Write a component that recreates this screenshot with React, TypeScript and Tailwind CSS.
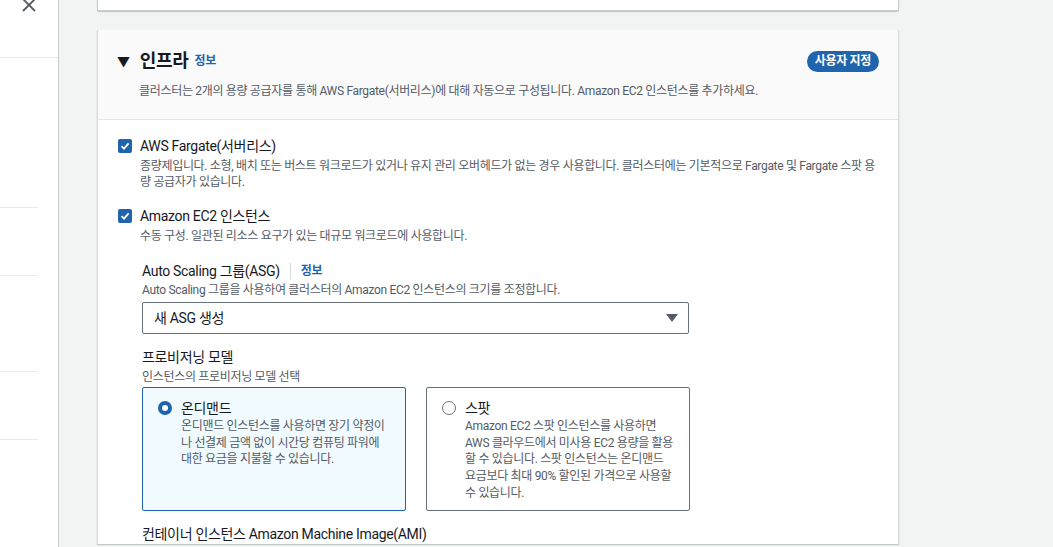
import * as React from 'react';

const font = { fontFamily: 'Roboto, "Noto Sans CJK KR", sans-serif' };

function CheckBox() {
	return (
		<span className="flex h-[14px] w-[14px] shrink-0 items-center justify-center rounded-[2px] bg-[#1f64ad]">
			<svg width="10" height="10" viewBox="0 0 10 10">
				<path d="M1.5 5.2 L4 7.6 L8.6 2.4" fill="none" stroke="#fff" strokeWidth="1.8" />
			</svg>
		</span>
	);
}

function Radio({ checked }: { checked: boolean }) {
	return checked ? (
		<span className="mt-[3px] h-[14px] w-[14px] shrink-0 rounded-full border-[4px] border-[#1f64ad] bg-white" />
	) : (
		<span className="mt-[3px] h-[14px] w-[14px] shrink-0 rounded-full border border-[#687078] bg-white" />
	);
}

function Tile({ checked, title, children }: { checked: boolean; title: string; children: React.ReactNode }) {
	return (
		<div
			className={`flex h-[124px] w-[264px] gap-[9px] rounded-[2px] border px-[15px] py-[10px] ${
				checked ? 'border-[#1f64ad] bg-[#f1faff]' : 'border-[#687078] bg-white'
			}`}
		>
			<Radio checked={checked} />
			<div className="flex flex-col">
				<span className="text-[14px] leading-[20px] text-[#16191f]">{title}</span>
				<span className="text-[12px] leading-[16.7px] text-[#545b64]">{children}</span>
			</div>
		</div>
	);
}

export default function App() {
	return (
		<div className="flex h-[547px] w-[1053px] overflow-hidden bg-[#f2f3f3] tracking-[-0.02em]" style={font}>
			<div className="relative flex w-[59px] shrink-0 flex-col border-r border-[#c6cacc] bg-white">
				<svg className="absolute left-[22px] top-[-2px]" width="14" height="14" viewBox="0 0 14 14">
					<path d="M1 1 L13 13 M13 1 L1 13" stroke="#545b64" strokeWidth="1.8" />
				</svg>
				<div className="mt-[57px] border-t border-[#e9ebed]" />
				<div className="mt-[149px] w-[38px] border-t border-[#e9ebed]" />
				<div className="mt-[67px] w-[38px] border-t border-[#e9ebed]" />
				<div className="mt-[95px] w-[38px] border-t border-[#e9ebed]" />
				<div className="mt-[67px] w-[38px] border-t border-[#e9ebed]" />
			</div>
			<div className="flex w-[802px] flex-col pl-[38px]">
				<div className="h-[11px] w-[802px] rounded-b-[2px] border-x border-b border-[#c6cacc] bg-white shadow-[0_1px_1px_rgba(0,28,36,0.2)]" />
				<div className="mt-[19px] w-[802px] border-x border-[#d5dbdb] bg-white shadow-[0_1px_1px_rgba(0,28,36,0.2)]">
					<div className="flex flex-col gap-[11px] border-b border-[#e4e6e8] bg-[#fafafa] px-[19px] pb-[20px] pt-[20px]">
						<div className="flex h-[22px] items-center">
							<span className="mr-[10px] text-[13px] leading-none text-[#16191f]">▼</span>
							<span className="text-[18px] font-bold leading-[22px] text-[#16191f]">인프라</span>
							<span className="ml-[6px] text-[12px] font-bold text-[#1f64ad]">정보</span>
							<span className="ml-auto rounded-full bg-[#1f64ad] px-[8px] py-[2px] text-[12px] font-bold leading-[17px] text-white">
								사용자 지정
							</span>
						</div>
						<p className="pl-[22px] text-[12px] leading-[16px] text-[#545b64]">
							클러스터는 2개의 용량 공급자를 통해 AWS Fargate(서버리스)에 대해 자동으로 구성됩니다. Amazon EC2 인스턴스를 추가하세요.
						</p>
					</div>
					<div className="flex flex-col px-[20px] pt-[16px]">
						<div className="flex items-center gap-[8px]">
							<CheckBox />
							<span className="text-[14px] leading-[20px] text-[#16191f]">AWS Fargate(서버리스)</span>
						</div>
						<p className="mt-[2px] pl-[22px] text-[12px] leading-[16px] text-[#545b64]">
							종량제입니다. 소형, 배치 또는 버스트 워크로드가 있거나 유지 관리 오버헤드가 없는 경우 사용합니다. 클러스터에는 기본적으로 Fargate 및 Fargate 스팟 용량 공급자가 있습니다.
						</p>
						<div className="mt-[16px] flex items-center gap-[8px]">
							<CheckBox />
							<span className="text-[14px] leading-[20px] text-[#16191f]">Amazon EC2 인스턴스</span>
						</div>
						<p className="mt-[2px] pl-[22px] text-[12px] leading-[16px] text-[#545b64]">
							수동 구성. 일관된 리소스 요구가 있는 대규모 워크로드에 사용합니다.
						</p>
						<div className="flex flex-col pl-[24px]">
							<div className="mt-[17px] flex items-center">
								<span className="text-[14px] leading-[20px] text-[#16191f]">Auto Scaling 그룹(ASG)</span>
								<span className="mx-[10px] h-[16px] border-l border-[#d5dbdb]" />
								<span className="text-[12px] font-bold text-[#1f64ad]">정보</span>
							</div>
							<p className="mt-[1px] text-[12px] leading-[16px] text-[#545b64]">
								Auto Scaling 그룹을 사용하여 클러스터의 Amazon EC2 인스턴스의 크기를 조정합니다.
							</p>
							<div className="mt-[4px] flex h-[32px] w-[547px] items-center justify-between rounded-[2px] border border-[#687078] bg-white pl-[11px] pr-[10px]">
								<span className="text-[14px] text-[#16191f]">새 ASG 생성</span>
								<svg width="12" height="10" viewBox="0 0 12 10">
									<path d="M0 1 L12 1 L6 9 Z" fill="#545b64" />
								</svg>
							</div>
							<span className="mt-[13px] text-[14px] leading-[20px] text-[#16191f]">프로비저닝 모델</span>
							<p className="mt-[2px] text-[12px] leading-[16px] text-[#545b64]">인스턴스의 프로비저닝 모델 선택</p>
							<div className="mt-[2px] flex gap-[20px]">
								<Tile checked title="온디맨드">
									온디맨드 인스턴스를 사용하면 장기 약정이 나 선결제 금액 없이 시간당 컴퓨팅 파워에 대한 요금을 지불할 수 있습니다.
								</Tile>
								<Tile checked={false} title="스팟">
									Amazon EC2 스팟 인스턴스를 사용하면 AWS 클라우드에서 미사용 EC2 용량을 활용할 수 있습니다. 스팟 인스턴스는 온디맨드 요금보다 최대 90% 할인된 가격으로 사용할 수 있습니다.
								</Tile>
							</div>
							<span className="mt-[13px] text-[14px] leading-[20px] text-[#16191f]">
								컨테이너 인스턴스 Amazon Machine Image(AMI)
							</span>
						</div>
					</div>
				</div>
			</div>
		</div>
	);
}
